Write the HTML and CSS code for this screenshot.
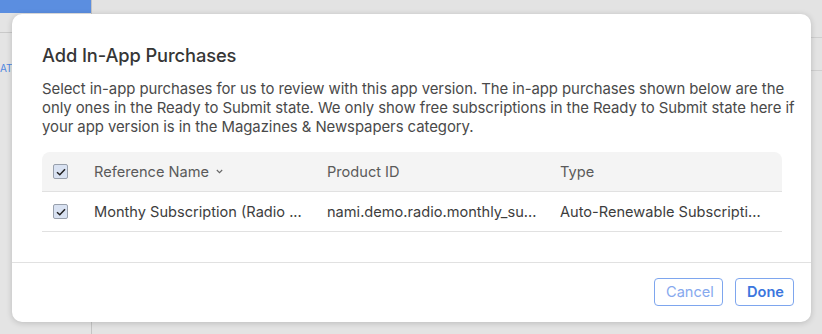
FILE: index.html
```html
<!DOCTYPE html>
<html>
<head>
    <title>Add In-App Purchases</title>
    <link rel="stylesheet" href="styles.css">
</head>
<body>

<div class="page">
    <div class="sidebar">
        <div class="side-button"></div>
        <div class="side-line"></div>
        <div class="side-link">AT</div>
    </div>
    <div class="main">
        <div class="main-line"></div>
        <div class="main-line second"></div>
    </div>
</div>

<div class="overlay">
    <div class="modal">
        <div class="modal-body">
            <h1 class="modal-title">Add In-App Purchases</h1>
            <p class="modal-text">Select in-app purchases for us to review with this app version. The in-app purchases shown below are the only ones in the Ready to Submit state. We only show free subscriptions in the Ready to Submit state here if your app version is in the Magazines &amp; Newspapers category.</p>

            <div class="table">
                <div class="row head">
                    <div class="cell check"><span class="box"><svg width="10" height="8" viewBox="0 0 10 8"><path d="M1 4.2 L3.8 6.8 L9 1.2" fill="none" stroke="#222" stroke-width="1.5"/></svg></span></div>
                    <div class="cell">Reference Name <svg class="caret" width="7" height="5" viewBox="0 0 7 5"><path d="M0.8 1 L3.5 3.7 L6.2 1" fill="none" stroke="#666" stroke-width="1.1"/></svg></div>
                    <div class="cell">Product ID</div>
                    <div class="cell">Type</div>
                </div>
                <div class="row">
                    <div class="cell check"><span class="box"><svg width="10" height="8" viewBox="0 0 10 8"><path d="M1 4.2 L3.8 6.8 L9 1.2" fill="none" stroke="#222" stroke-width="1.5"/></svg></span></div>
                    <div class="cell">Monthy Subscription (Radio ...</div>
                    <div class="cell">nami.demo.radio.monthly_su...</div>
                    <div class="cell">Auto-Renewable Subscripti...</div>
                </div>
            </div>
        </div>
        <div class="modal-foot">
            <button class="btn cancel">Cancel</button>
            <button class="btn done">Done</button>
        </div>
    </div>
</div>

</body>
</html>
```

FILE: styles.css
```css
:root {
    --blue: #4a82e8;
    --dim: #e2e2e2;
    --text: #3d3d3d;
    --line: #e1e1e1;
}

body {
    margin: 0;
    width: 822px;
    height: 334px;
    overflow: hidden;
    position: relative;
    background: var(--dim);
    font-family: Inter, "Noto Sans", sans-serif;
}

/* dimmed page behind the sheet */
.page {
    display: flex;
    height: 334px;
}

.sidebar {
    width: 91px;
    border-right: 1px solid #c4c4c4;
    background: #e4e4e4;
}

.side-button {
    height: 13px;
    background: #5b8ee0;
}

.side-line {
    height: 1px;
    background: #c9c9c9;
    margin-top: 19px;
}

.side-link {
    color: #4f86e0;
    font-size: 10px;
    margin-top: 29px;
}

.main {
    flex: 1;
    background: #e3e3e3;
}

.main-line {
    height: 1px;
    background: #cfcfcf;
    margin-top: 37px;
}

.main-line.second {
    margin-top: 32px;
}

/* modal sheet */
.overlay {
    position: absolute;
    left: 12px;
    top: 14px;
}

.modal {
    width: 799px;
    height: 308px;
    background: #fff;
    border-radius: 10px;
    box-shadow: 0 1px 6px rgba(0, 0, 0, 0.18);
    display: flex;
    flex-direction: column;
}

.modal-body {
    padding: 30px 12px 0 30px;
    flex: 1;
    border-bottom: 1px solid var(--line);
}

.modal-title {
    margin: 0;
    font-size: 18.3px;
    font-weight: 500;
    color: #363636;
    letter-spacing: -0.1px;
}

.modal-text {
    margin: 14px 0 15px;
    font-size: 14.9px;
    line-height: 19px;
    color: #4a4a4a;
    letter-spacing: -0.05px;
}

.table {
    width: 740px;
}

.row {
    display: grid;
    grid-template-columns: 40px 233px 233px 234px;
    height: 39px;
    align-items: center;
    border-bottom: 1px solid var(--line);
    font-size: 14.6px;
    color: var(--text);
}

.row.head {
    background: #f4f4f4;
    border-radius: 8px 8px 0 0;
    color: #5a5a5a;
}

.cell {
    padding-left: 12px;
    white-space: nowrap;
    overflow: hidden;
}

.cell.check {
    padding-left: 11px;
    display: flex;
}

.box {
    width: 13px;
    height: 13px;
    border: 1px solid #98a0ac;
    border-radius: 2px;
    background: #d9e2f2;
    display: flex;
    align-items: center;
    justify-content: center;
}

.caret {
    margin-left: 3px;
    vertical-align: 3px;
}

.modal-foot {
    height: 59px;
    display: flex;
    justify-content: flex-end;
    align-items: flex-start;
    padding-top: 15px;
    box-sizing: border-box;
    gap: 12px;
    padding-right: 17px;
}

.btn {
    height: 28px;
    border: 1px solid #7ea6ee;
    border-radius: 4px;
    background: #fff;
    font-family: Inter, "Noto Sans", sans-serif;
    font-size: 14.6px;
    padding: 0 11px;
}

.btn.cancel {
    color: #86a9ee;
    width: 69px;
}

.btn.done {
    color: #3c76de;
    font-weight: 600;
    width: 59px;
}
```
